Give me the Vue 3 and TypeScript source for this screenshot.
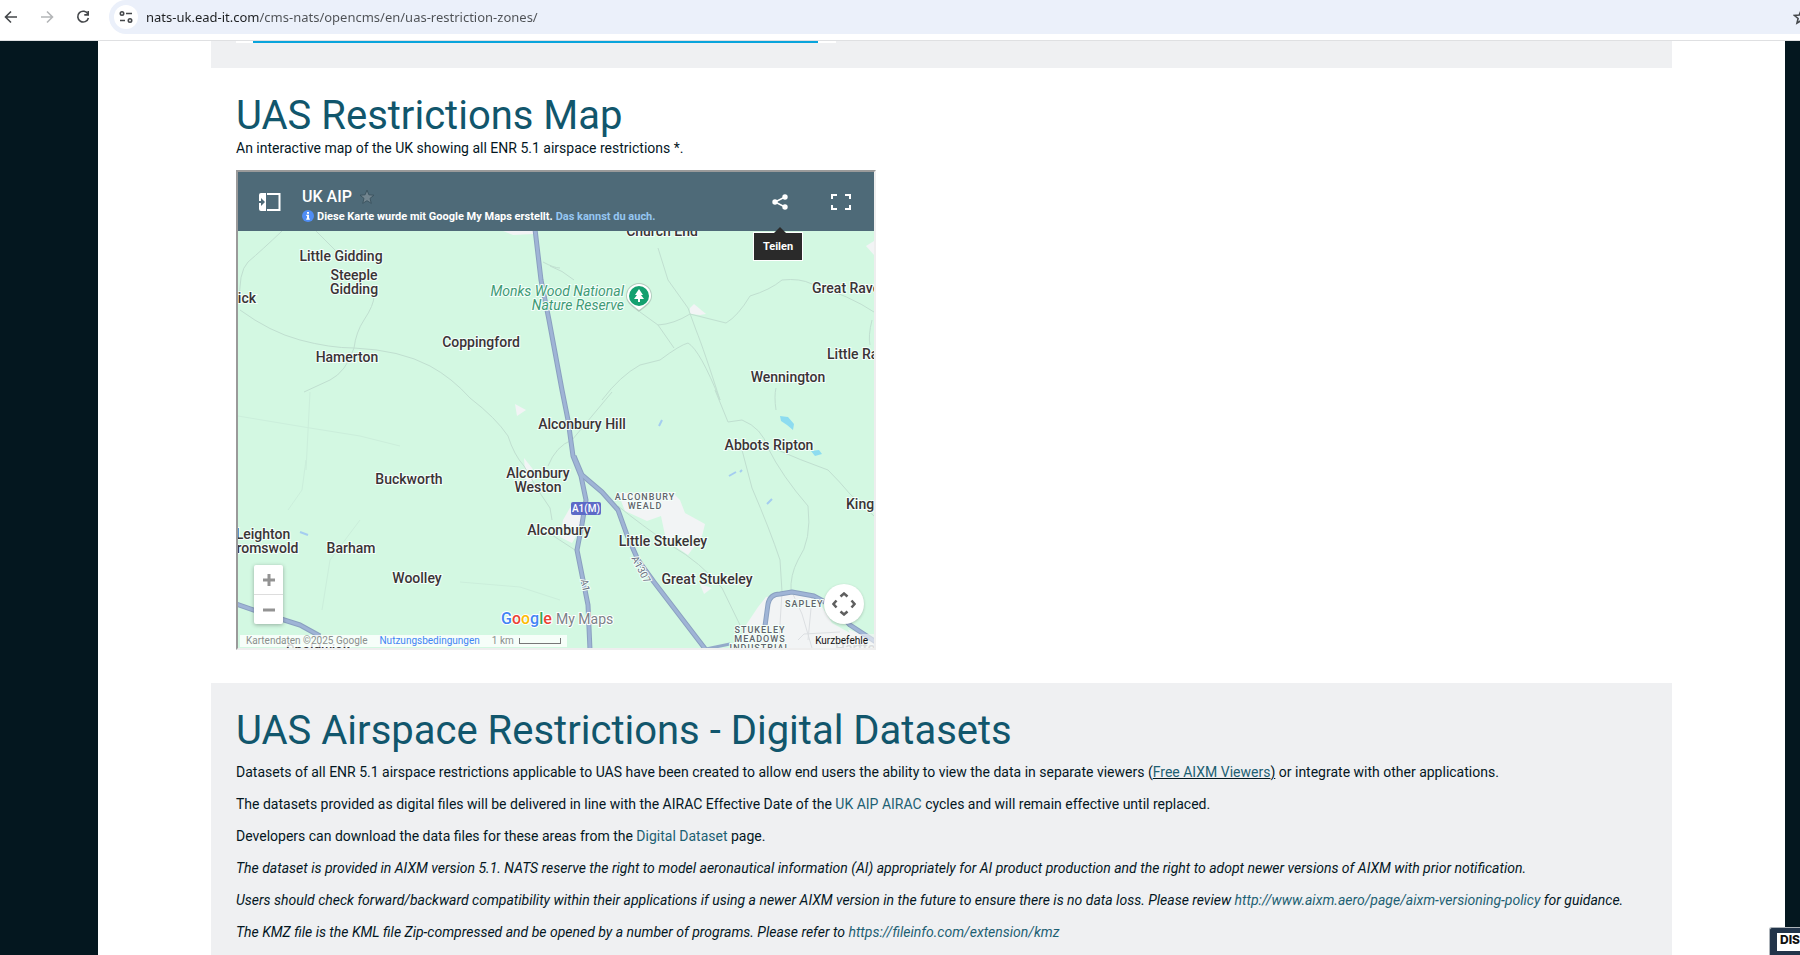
<script setup lang="ts">
import { ref } from 'vue'

interface Label {
  x: number
  y: number
  lines: string[]
  anchor?: 'start' | 'middle' | 'end'
  kind?: 'district' | 'park' | 'faded'
}

const address = ref('nats-uk.ead-it.com/cms-nats/opencms/en/uas-restriction-zones/')

const labels: Label[] = [
  { x: 341, y: 261, lines: ['Little Gidding'] },
  { x: 354, y: 280, lines: ['Steeple', 'Gidding'] },
  { x: 256, y: 303, lines: ['Winwick'], anchor: 'end' },
  { x: 347, y: 362, lines: ['Hamerton'] },
  { x: 481, y: 347, lines: ['Coppingford'] },
  { x: 624, y: 296, lines: ['Monks Wood National', 'Nature Reserve'], anchor: 'end', kind: 'park' },
  { x: 662, y: 236, lines: ['Church End'] },
  { x: 812, y: 293, lines: ['Great Raveley'], anchor: 'start' },
  { x: 827, y: 359, lines: ['Little Raveley'], anchor: 'start' },
  { x: 788, y: 382, lines: ['Wennington'] },
  { x: 582, y: 429, lines: ['Alconbury Hill'] },
  { x: 769, y: 450, lines: ['Abbots Ripton'] },
  { x: 409, y: 484, lines: ['Buckworth'] },
  { x: 538, y: 478, lines: ['Alconbury', 'Weston'] },
  { x: 559, y: 535, lines: ['Alconbury'] },
  { x: 645, y: 500, lines: ['ALCONBURY', 'WEALD'], kind: 'district' },
  { x: 846, y: 509, lines: ['Kings Ripton'], anchor: 'start' },
  { x: 263, y: 539, lines: ['Leighton', 'Bromswold'] },
  { x: 351, y: 553, lines: ['Barham'] },
  { x: 417, y: 583, lines: ['Woolley'] },
  { x: 663, y: 546, lines: ['Little Stukeley'] },
  { x: 707, y: 584, lines: ['Great Stukeley'] },
  { x: 785, y: 607, lines: ['SAPLEY'], anchor: 'start', kind: 'district' },
  { x: 760, y: 633, lines: ['STUKELEY', 'MEADOWS', 'INDUSTRIAL'], kind: 'district' },
  { x: 835, y: 653, lines: ['Hartford'], anchor: 'start', kind: 'faded' },
  { x: 318, y: 655, lines: ['Spaldwick'] },
]

const step = (l: Label) => (l.kind === 'district' ? 9 : 14)

const minorRoads: string[] = [
  'M282 231 Q262 250 248 262 Q238 272 240 304',
  'M316 231 L338 253',
  'M374 296 Q374 305 364 320 Q356 332 354 348 Q346 372 330 380 L304 392',
  'M240 310 Q270 332 300 340 Q330 348 354 348 Q400 350 430 366 Q452 378 470 398 Q496 418 508 436 Q514 455 524 466',
  'M543 262 Q554 268 560 268',
  'M550 266 Q562 270 574 280',
  'M658 248 L668 280 L688 308 L696 330 Q704 350 720 400',
  'M640 312 L658 325 L674 348',
  'M658 325 Q674 324 690 314 L726 323 Q738 316 750 296 Q770 290 782 280 Q800 278 812 284 Q850 296 874 312',
  'M602 400 Q620 376 640 365 L660 360 Q680 345 688 343 Q700 350 720 400',
  'M715 390 L728 422 L742 420 Q762 428 768 448 Q782 476 808 506 Q812 540 798 560 Q790 575 791 592',
  'M773 448 Q800 460 828 470 Q840 482 850 494 L874 516',
  'M742 450 L752 488 Q770 530 780 560 L782 592',
  'M776 410 Q774 396 776 388',
  'M548 466 Q556 446 572 440 L612 392',
  'M618 506 Q640 524 672 546 Q700 562 722 588 L740 625',
  'M524 466 L538 490 L550 508 L552 520',
  'M552 535 L575 550',
  'M872 320 Q868 336 870 345',
]

const lanes: string[] = [
  'M238 416 L310 428 L360 436 L400 446',
  'M306 460 L302 490 L288 510',
  'M310 392 L306 470',
  'M460 582 L520 587 L560 600',
  'M360 520 L330 560 L322 610',
]

const streets: string[] = [
  'M792 592 L802 614 L812 648',
  'M782 592 L779 640',
  'M812 598 L808 640',
  'M798 640 L804 634 L840 632',
]

const motorways: string[] = [
  'M535 229 L541 280 L549 320 L562 390 L568 420 L573 456 L581 476 L586 500 L582 524 L577 550 L583 580 L588 605 L590 650',
  'M574 456 L582 475 L602 492 L618 510 L627 535 L638 560 L654 582 L680 616 L706 650',
  'M765 626 L768 604 Q770 594 780 594 L792 592 L814 596 Q832 604 850 625 L876 642',
  'M236 604 L262 613 L300 625 L320 636',
]
</script>

<template>
  <div class="window">
    <header class="toolbar">
      <button class="nav" aria-label="Back">
        <svg viewBox="0 0 16 16"><path d="M14 8H3M8 2.5 2.5 8 8 13.5" /></svg>
      </button>
      <button class="nav nav-off" aria-label="Forward" disabled>
        <svg viewBox="0 0 16 16"><path d="M2 8h11M8 2.5 13.5 8 8 13.5" /></svg>
      </button>
      <button class="nav" aria-label="Reload">
        <svg viewBox="0 0 16 16"><path d="M13 5.2A5.4 5.4 0 1 0 13.4 9" /><path d="M13.2 2v3.9H9.3" /></svg>
      </button>
      <div class="omnibox">
        <button class="site-info" aria-label="Site information">
          <svg viewBox="0 0 16 16"><circle cx="4" cy="4.5" r="1.7" /><path d="M8 4.5h6M2 11.5h5" /><circle cx="12" cy="11.5" r="1.7" /></svg>
        </button>
        <input v-model="address" class="address" type="text" aria-label="Address" />
        <button class="bookmark" aria-label="Bookmark this tab">
          <svg viewBox="0 0 16 16"><path d="m8 1.8 1.8 4.3 4.7.4-3.600 3 1.100 4.600L8 11.700l-4 2.400 1.100-4.600-3.600-3 4.700-.4z" /></svg>
        </button>
      </div>
    </header>

    <div class="page">
      <main class="sheet">
        <div class="panel strip"><div class="picture"><div class="picture-line"></div></div></div>

        <section class="block">
          <h1>UAS Restrictions Map</h1>
          <p>An interactive map of the UK showing all ENR 5.1 airspace restrictions *.</p>

          <div class="map-frame">
            <div class="map-head">
              <button class="icon-btn legend-btn" aria-label="Show legend">
                <svg width="24" height="20" viewBox="0 0 24 20">
                  <path d="M3 1h5v18H3a2 2 0 0 1-2-2v-6h2v3l4-4-4-4v3H1V3a2 2 0 0 1 2-2z" fill="#fff" />
                  <path d="M9 2h12.500v16H9" fill="none" stroke="#fff" stroke-width="2" />
                </svg>
              </button>
              <div class="map-info">
                <div class="map-title">
                  <span>UK AIP</span>
                  <svg width="16" height="16" viewBox="0 0 16 16"><path d="m8 1 1.900 4.800 5.100.4-4 3.200 1.300 5L8 11.700l-4.300 2.700 1.300-5-4-3.200 5.100-.4z" fill="#72858f" stroke="#3d5561" /></svg>
                </div>
                <div class="map-note">
                  <svg width="12" height="12" viewBox="0 0 12 12"><circle cx="6" cy="6" r="6" fill="#4f8df5" /><path d="M5 2h2v1.700H5zM4.300 4.800H7v3.700h.8v1.200H4.200V8.500H5V6h-.7z" fill="#fff" /></svg>
                  <span>Diese Karte wurde mit Google My Maps erstellt.</span>
                  <a href="#">Das kannst du auch.</a>
                </div>
              </div>
              <div class="share">
                <button class="icon-btn" aria-label="Teilen" aria-describedby="share-tip">
                  <svg width="16" height="16" viewBox="0 0 16 16"><path d="M13 3 3 8l10 5" fill="none" stroke="#fff" stroke-width="1.500" /><g fill="#fff"><circle cx="13" cy="3" r="2.700" /><circle cx="3" cy="8" r="2.700" /><circle cx="13" cy="13" r="2.700" /></g></svg>
                </button>
                <span id="share-tip" class="tip" role="tooltip">Teilen</span>
              </div>
              <button class="icon-btn" aria-label="Vollbild">
                <svg width="20" height="16" viewBox="0 0 20 16"><path d="M1 5V1h5M14 1h5v4M19 11v4h-5M6 15H1v-4" fill="none" stroke="#fff" stroke-width="2" /></svg>
              </button>
            </div>

            <div class="map-body">
              <svg class="map" viewBox="238 231 636 417" preserveAspectRatio="xMidYMid slice" role="img" aria-label="Karte">
                <rect x="238" y="231" width="636" height="417" fill="#d3f8e2" />
                <g fill="#f2f4f5">
                  <path d="M503 231h34l-4 3-20 1z" />
                  <path d="m690 308 4-4 6 5 6 5-6 1-10-1z" />
                  <path d="m866 246 8-5v14z" />
                  <path d="m515 404 11 6-9 6z" />
                  <path d="m524 458 8 10 6 10-12 6z" />
                  <path d="m563 520 8-14 10 4v18l-9 15-12-6z" />
                  <path d="m618 493 54-1 8 8 5 13 20 11-3 12-14 19-22-15-5-24-14 5-22-10z" />
                  <path d="m700 584 12 4-8 6z" />
                  <path d="m738 648 8-23 12-18 8-10 25-3 24 4 16 13 16 18 29 10v9z" />
                </g>
                <path d="m816 597 22 16 12 20-18-10z" fill="#d3f8e2" />
                <g fill="#8ddcf0">
                  <path d="m780 416 8 1 6 7-1 6-6-5-6-4z" />
                  <path d="m811 451 8-1 3 4-7 2z" />
                </g>
                <g fill="none" stroke="#a4cdf0" stroke-width="2">
                  <path d="m729 476 7-4m4 0 2-2M767 504l5-5M659 426l3-6M300 532l8 3" />
                </g>
                <g fill="none" stroke="#c0dfd0"><path v-for="d in minorRoads" :key="d" :d="d" /></g>
                <g fill="none" stroke="#cbeedb"><path v-for="d in lanes" :key="d" :d="d" /></g>
                <g fill="none" stroke="#dcdfe2"><path v-for="d in streets" :key="d" :d="d" /></g>
                <g fill="none" stroke-linejoin="round">
                  <path v-for="d in motorways" :key="d" :d="d" stroke="#8aa0c0" stroke-width="5" />
                  <path v-for="d in motorways" :key="'i' + d" :d="d" stroke="#9fb4d6" stroke-width="3" />
                </g>
                <path d="M706 649l24-5" stroke="#93a9c9" stroke-width="3" />

                <text
                  v-for="l in labels"
                  :key="l.lines.join() + l.x"
                  :class="['place', l.kind]"
                  :text-anchor="l.anchor ?? 'middle'"
                ><tspan v-for="(t, i) in l.lines" :key="t" :x="l.x" :y="l.y + i * step(l)">{{ t }}</tspan></text>

                <rect x="571" y="502" width="30" height="13" rx="2" fill="#5d6ac7" />
                <text class="shield" x="586" y="512" text-anchor="middle">A1(M)</text>
                <text class="road" transform="translate(638 571) rotate(62)" text-anchor="middle">A1307</text>
                <text class="road" transform="translate(582 586) rotate(78)" text-anchor="middle">A1</text>

                <path d="M639 312c-9-7-13-10-13-16a13 13 0 0 1 26 0c0 6-4 9-13 16z" fill="#b4cdbf" />
                <path d="M639 310c-8-6-12-9-12-14a12 12 0 0 1 24 0c0 5-4 8-12 14z" fill="#fff" />
                <circle cx="639" cy="296" r="10" fill="#14a06f" />
                <path d="m639 289-4 6h2l-3 4h4v3h2v-3h4l-3-4h2z" fill="#fff" />
                <text class="brand" x="501" y="624"><tspan fill="#4285f4">G</tspan><tspan fill="#ea4335">o</tspan><tspan fill="#fbbc04">o</tspan><tspan fill="#4285f4">g</tspan><tspan fill="#34a853">l</tspan><tspan fill="#ea4335">e</tspan></text>
                <text class="brand-sub" x="556" y="624">My Maps</text>
              </svg>

              <div class="zoomer">
                <button aria-label="Vergrößern"><svg width="12" height="12" viewBox="0 0 12 12"><path d="M6 0v12M0 6h12" /></svg></button>
                <button aria-label="Verkleinern"><svg width="12" height="12" viewBox="0 0 12 12"><path d="M0 6h12" /></svg></button>
              </div>
              <button class="pan" aria-label="Kamerasteuerung">
                <svg width="24" height="24" viewBox="0 0 24 24"><path d="m8.500 4.500 3.500-3 3.500 3M8.500 19.500l3.500 3 3.500-3M4.500 8.500l-3 3.500 3 3.500M19.500 8.500l3 3.500-3 3.500" /></svg>
              </button>
              <div class="credits">
                <span>Kartendaten ©2025 Google</span>
                <a href="#">Nutzungsbedingungen</a>
                <span class="scale">1 km <i></i></span>
              </div>
              <button class="keys">Kurzbefehle</button>
            </div>
          </div>
        </section>

        <section class="block panel datasets">
          <h1>UAS Airspace Restrictions - Digital Datasets</h1>
          <div class="copy">
            <p>Datasets of all ENR 5.1 airspace restrictions applicable to UAS have been created to allow end users the ability to view the data in separate viewers (<u><a href="#">Free AIXM Viewers</a>)</u> or integrate with other applications.</p>
            <p>The datasets provided as digital files will be delivered in line with the AIRAC Effective Date of the <a href="#">UK AIP AIRAC</a> cycles and will remain effective until replaced.</p>
            <p>Developers can download the data files for these areas from the <a href="#">Digital Dataset</a> page.</p>
            <p><em>The dataset is provided in AIXM version 5.1. NATS reserve the right to model aeronautical information (AI) appropriately for AI product production and the right to adopt newer versions of AIXM with prior notification.</em></p>
            <p><em>Users should check forward/backward compatibility within their applications if using a newer AIXM version in the future to ensure there is no data loss. Please review <a href="#">http://www.aixm.aero/page/aixm-versioning-policy</a> for guidance.</em></p>
            <p><em>The KMZ file is the KML file Zip-compressed and be opened by a number of programs. Please refer to <a href="#">https://fileinfo.com/extension/kmz</a></em></p>
          </div>
        </section>
      </main>
    </div>
    <button class="dock"><span>DIS</span></button>
  </div>
</template>

<style>
body {
  overflow: hidden;
}
</style>

<style scoped>
.window {
  display: flex;
  flex-direction: column;
  min-height: 100vh;
  color: #04171f;
  font: 14px/22px Roboto, sans-serif;
}
button {
  padding: 0;
  border: 0;
  background: none;
  font: inherit;
  color: inherit;
}
svg {
  display: block;
}
.toolbar {
  display: flex;
  align-items: flex-start;
  height: 40px;
  border-bottom: 1px solid #dfe0e2;
  background: #fff;
  overflow: hidden;
}
.nav {
  display: grid;
  place-items: center;
  flex: none;
  width: 36px;
  height: 34px;
  margin-left: -7px;
  margin-right: 7px;
}
.nav svg,
.site-info svg,
.bookmark svg {
  width: 16px;
  height: 16px;
  fill: none;
  stroke: #44474a;
  stroke-width: 1.6;
}
.nav-off svg {
  stroke: #b4b6b8;
}
.omnibox {
  display: flex;
  align-items: center;
  flex: 1;
  gap: 8px;
  height: 34px;
  margin-left: 1px;
  margin-right: -17px;
  padding: 0 8px 0 5px;
  border-radius: 17px;
  background: #ebf0fa;
}
.site-info {
  display: grid;
  place-items: center;
  flex: none;
  width: 24px;
  height: 24px;
  border-radius: 50%;
  background: #fff;
}
.bookmark {
  flex: none;
}
.address {
  flex: 1;
  min-width: 0;
  padding: 0;
  border: 0;
  outline: 0;
  background: linear-gradient(90deg, #1d1f21 113px, #4d5054 113px);
  background-clip: text;
  color: transparent;
  font: 13px/20px 'Noto Sans', sans-serif;
}
.page {
  display: flex;
  flex: 1;
  padding: 0 15px 0 98px;
  background: #04171f;
}
.sheet {
  display: flex;
  flex-direction: column;
  flex: 1;
  padding: 0 113px;
  background: #fff;
}
.panel {
  background: #eff0f2;
}
.strip {
  height: 27px;
  padding: 0 25px;
}
.picture {
  max-width: 565px;
  padding: 0 18px 0 17px;
  background: #fff;
}
.picture-line {
  height: 2px;
  background: #08a4dc;
}
.block {
  padding: 26px 25px 33px;
}
h1 {
  margin: 0 0 -1px;
  color: #11566c;
  font-size: 40px;
  line-height: 44px;
  font-weight: 400;
}
p {
  margin: 0;
}
.copy a {
  color: #1d6073;
  text-decoration: none;
}
.datasets {
  flex: 1;
  padding-bottom: 0;
}
.copy {
  display: flex;
  flex-direction: column;
  gap: 10px;
  margin-top: 9px;
  padding-bottom: 10px;
}
.map-frame {
  box-sizing: border-box;
  max-width: 640px;
  margin-top: 11px;
  border: 2px solid;
  border-color: #9a9a9a #eee #eee #9a9a9a;
}
.map-head {
  display: flex;
  align-items: center;
  height: 59px;
  padding: 0 23px 0 20px;
  background: #4e6a78;
  color: #fff;
}
.icon-btn {
  display: block;
}
.map-info {
  flex: 1;
  margin-left: 20px;
  padding-top: 9px;
}
.map-title {
  display: flex;
  align-items: center;
  gap: 7px;
  font-size: 16px;
  line-height: 20px;
  font-weight: 500;
}
.map-note {
  display: flex;
  align-items: center;
  gap: 3px;
  font-size: 11px;
  line-height: 19px;
  font-weight: 700;
}
.map-note a {
  color: #96c6f1;
  text-decoration: none;
}
.share {
  position: relative;
  margin-right: 43px;
}
.tip {
  position: absolute;
  z-index: 2;
  top: 38px;
  left: 50%;
  width: 48px;
  margin-left: -27px;
  border: 1px solid #fff;
  background: #2a2a2a;
  font-size: 11px;
  line-height: 27px;
  font-weight: 700;
  text-align: center;
}
.tip::before {
  content: '';
  position: absolute;
  top: -6px;
  left: 20px;
  border: 6px solid transparent;
  border-top: 0;
  border-bottom-color: #2a2a2a;
}
.map-body {
  position: relative;
  height: 417px;
  overflow: hidden;
}
.map {
  width: 100%;
  height: 100%;
}
.place {
  fill: #3a3436;
  stroke: #f4fffa;
  stroke-width: 2px;
  paint-order: stroke;
  font-size: 14px;
  font-weight: 500;
}
.park {
  fill: #3f9a75;
  font-style: italic;
  font-weight: 400;
}
.district {
  fill: #60646a;
  font-size: 9px;
  letter-spacing: 1px;
}
.faded {
  fill: #b5b8bb;
}
.shield {
  fill: #fff;
  font-size: 10px;
  font-weight: 500;
}
.road {
  fill: #6b7080;
  stroke: #f4fffa;
  stroke-width: 2px;
  paint-order: stroke;
  font-size: 10px;
}
.brand {
  stroke: #fff;
  stroke-width: 2px;
  paint-order: stroke;
  font-size: 16px;
  font-weight: 500;
}
.brand-sub {
  fill: #7b8288;
  stroke: #fff;
  stroke-width: 2px;
  paint-order: stroke;
  font-size: 14px;
}
.zoomer {
  position: absolute;
  left: 16px;
  bottom: 24px;
  width: 29px;
  border-radius: 2px;
  background: #fff;
  box-shadow: 0 1px 4px rgba(0, 0, 0, 0.3);
}
.zoomer button {
  display: grid;
  place-items: center;
  width: 100%;
  height: 29px;
}
.zoomer button + button {
  border-top: 1px solid #ddd;
  height: 30px;
}
.zoomer path {
  stroke: #939393;
  stroke-width: 3;
}
.pan {
  position: absolute;
  right: 10px;
  bottom: 24px;
  display: grid;
  place-items: center;
  width: 40px;
  height: 40px;
  border-radius: 50%;
  background: #fff;
  box-shadow: 0 1px 3px rgba(0, 0, 0, 0.2);
}
.pan path {
  fill: none;
  stroke: #5f5f5f;
  stroke-width: 2.5;
}
.credits {
  position: absolute;
  left: 2px;
  bottom: 1px;
  display: flex;
  gap: 12px;
  padding: 0 6px;
  background: rgba(255, 255, 255, 0.8);
  color: #8b8f8d;
  font-size: 10px;
  line-height: 12px;
}
.credits a {
  color: #4285f4;
  text-decoration: none;
}
.scale {
  display: flex;
  gap: 5px;
}
.scale i {
  width: 40px;
  height: 5px;
  margin-top: 3px;
  border: solid #777;
  border-width: 0 1px 1px;
}
.keys {
  position: absolute;
  right: 0;
  bottom: 0;
  padding: 0 6px 0 1px;
  background: rgba(245, 245, 245, 0.6);
  color: #111;
  font-size: 10px;
  line-height: 14px;
}
.dock {
  position: fixed;
  right: 0;
  bottom: 0;
  display: flex;
  width: 31px;
  height: 28px;
  padding: 5px 0 4px 7px;
  border: solid #aeb4ba;
  border-width: 1px 0 0 1px;
  border-radius: 3px 0 0;
  background: #22344a;
}
.dock span {
  flex: 1;
  padding-left: 3px;
  background: #fff;
  color: #111;
  overflow: hidden;
  font: 800 12px/14px Inter, sans-serif;
}
</style>
